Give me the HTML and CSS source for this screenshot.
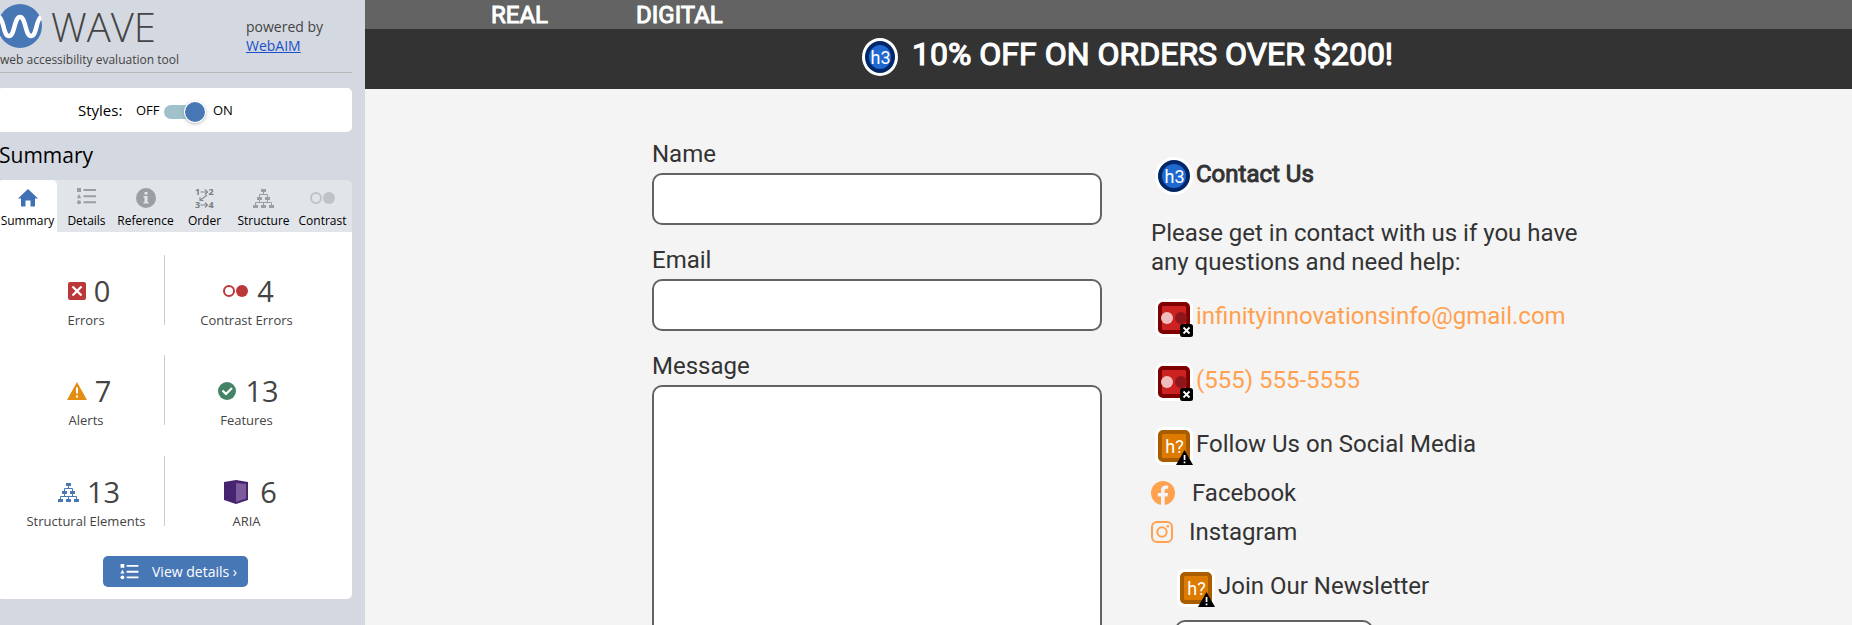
FILE: index.html
```html
<!DOCTYPE html>
<html lang="en">
<head>
<meta charset="utf-8">
<title>Contact</title>
<link rel="stylesheet" href="styles.css">
</head>
<body>
<svg width="0" height="0" class="defs" aria-hidden="true">
  <symbol id="list" viewBox="0 0 19 17"><path d="M0 0h4v4H0zM2 6l2.200 4.200H-.2zM6.500 1h12.500v2H6.500zM6.500 7.200h12.500v2H6.500zM6.500 13.200h12.500v2H6.500z"/><circle cx="2" cy="14.200" r="2"/></symbol>
  <symbol id="tree" viewBox="0 0 21 19"><path d="M8 0h5v3H8zM4 8h5v3H4zM12 8h5v3h-5zM0 16h5v3H0zM8 16h5v3H8zM16 16h5v3h-5z"/><path d="M10.500 3v3M6.500 8V5.500h8V8M6.500 11v3M14.500 11v3M2.500 16v-2.500h16V16M10.500 13.500V16" fill="none" stroke="currentColor"/></symbol>
  <symbol id="pair" viewBox="0 0 25 12"><circle cx="6" cy="6" r="5" fill="none" stroke="currentColor" stroke-width="2"/><circle cx="19" cy="6" r="6"/></symbol>
</svg>
<div class="app">
  <aside class="side">
    <header class="brand">
      <div class="brand-main">
        <div class="logo">
          <svg class="mark" viewBox="0 0 44 44"><circle cx="22" cy="22" r="22" fill="#4877b6"/><path d="M1 13C6 15 5 32 11 32C17 32 16 13 22 13C28 13 27 32 33 32C39 32 38 15 43 13" fill="none" stroke="#fff" stroke-width="4.500"/></svg>
          <span class="wave">WAVE</span>
        </div>
        <div class="tagline">web accessibility evaluation tool</div>
      </div>
      <div class="powered">powered by<br><a href="#">WebAIM</a></div>
    </header>
    <div class="styles-card"><span class="styles-label">Styles:</span><span class="off">OFF</span><span class="track"><i></i></span><span class="on">ON</span></div>
    <h2 class="title">Summary</h2>
    <nav class="tabs">
      <div class="tab active"><div class="tab-icon"><svg width="20" height="18" viewBox="0 0 20 18" fill="#4170b4"><path d="M10 0L20 9.500H17V17.500H12.500V11.500H7.500V17.500H3V9.500H0z"/></svg></div><span>Summary</span></div>
      <div class="tab"><div class="tab-icon raise"><svg width="19" height="17"><use href="#list"/></svg></div><span>Details</span></div>
      <div class="tab"><div class="tab-icon"><svg width="20" height="20" viewBox="0 0 20 20"><circle cx="10" cy="10" r="10"/><path d="M8.500 4h3v2.500h-3zM7.500 8h4v6h1v1.500h-5V14h1V9.500h-1z" fill="#e1e4e9"/></svg></div><span>Reference</span></div>
      <div class="tab"><div class="tab-icon"><svg width="20" height="22" viewBox="0 0 20 22" fill="#777b7e"><text x="0" y="8" class="ord">1</text><text x="13.500" y="8" class="ord">2</text><text x="0" y="21" class="ord">3</text><text x="13.500" y="21" class="ord">4</text><path d="M5.500 5h7M10 2.500l2.500 2.500L10 7.500M5.500 18h7M10 15.500l2.500 2.500-2.500 2.500M12 8l-7 5.500M5 10v3.500h3.500" fill="none" stroke="#85898d" stroke-width="1.100"/></svg></div><span>Order</span></div>
      <div class="tab"><div class="tab-icon"><svg width="21" height="19"><use href="#tree"/></svg></div><span>Structure</span></div>
      <div class="tab"><div class="tab-icon pale"><svg width="25" height="12"><use href="#pair"/></svg></div><span>Contrast</span></div>
    </nav>
    <section class="panel">
      <div class="stats">
        <div class="stat"><div class="count"><svg width="18" height="18" viewBox="0 0 18 18"><rect width="18" height="18" rx="2" fill="#bc3838"/><path d="M4.500 4.500l9 9M13.500 4.500l-9 9" stroke="#fff" stroke-width="2.300"/></svg><b>0</b></div>Errors</div>
        <div class="stat"><div class="count red"><svg width="25" height="12"><use href="#pair"/></svg><b>4</b></div>Contrast Errors</div>
        <div class="stat"><div class="count"><svg width="20" height="18" viewBox="0 0 20 18"><path d="M10 0l10 18H0z" fill="#e38d13"/><path d="M9 5.500h2v6H9zM9 13.500h2v2H9z" fill="#fff"/></svg><b>7</b></div>Alerts</div>
        <div class="stat"><div class="count"><svg width="18" height="18" viewBox="0 0 18 18"><circle cx="9" cy="9" r="9" fill="#458366"/><path d="M4.500 8.500l3.500 3.500 6-6" fill="none" stroke="#fff" stroke-width="2.200"/></svg><b>13</b></div>Features</div>
        <div class="stat"><div class="count blue"><svg width="21" height="19"><use href="#tree"/></svg><b>13</b></div>Structural Elements</div>
        <div class="stat"><div class="count aria"><svg width="24" height="24" viewBox="0 0 24 24"><path d="M0 2L12 0l12 2v18l-12 4-12-4z" fill="#47246f"/><path d="M12 3l10 1v14.500L12 22z" fill="#7d5a9b"/></svg><b>6</b></div>ARIA</div>
      </div>
      <button class="view"><svg width="19" height="16"><use href="#list"/></svg><span>View details ›</span></button>
    </section>
  </aside>
  <main class="page">
    <nav class="top"><span class="real">REAL</span><span class="digital">DIGITAL</span></nav>
    <div class="banner"><span class="flag h3"><em>h3</em></span><strong>10% OFF ON ORDERS OVER $200!</strong></div>
    <div class="content">
      <form class="form">
        <label><span>Name</span><input type="text"></label>
        <label><span>Email</span><input type="text"></label>
        <label><span>Message</span><textarea></textarea></label>
      </form>
      <section class="contact">
        <div class="row contact-head"><span class="flag h3"><em>h3</em></span><strong>Contact Us</strong></div>
        <p class="intro">Please get in contact with us if you have<br>any questions and need help:</p>
        <div class="row link"><span class="flag err"><svg width="35" height="35" viewBox="0 0 35 35"><circle cx="9" cy="16" r="6" fill="#f1bcbc"/><circle cx="23" cy="16" r="6" fill="#8f1719"/><rect x="22" y="22" width="13" height="13" rx="2.500"/><path d="M25.500 25.500l6 6M31.500 25.500l-6 6" stroke="#fff" stroke-width="1.800"/></svg></span><span>infinityinnovationsinfo@gmail.com</span></div>
        <div class="row link"><span class="flag err"><svg width="35" height="35" viewBox="0 0 35 35"><circle cx="9" cy="16" r="6" fill="#f1bcbc"/><circle cx="23" cy="16" r="6" fill="#8f1719"/><rect x="22" y="22" width="13" height="13" rx="2.500"/><path d="M25.500 25.500l6 6M31.500 25.500l-6 6" stroke="#fff" stroke-width="1.800"/></svg></span><span>(555) 555-5555</span></div>
        <div class="row follow"><span class="flag warn"><em>h?</em><svg width="35" height="35" viewBox="0 0 35 35"><path d="M26.500 20L35 35H18z"/><path d="M25.700 25h1.700v5h-1.700zM25.700 31.500h1.700v1.800h-1.700z" fill="#fff"/></svg></span><span>Follow Us on Social Media</span></div>
        <div class="social fb"><svg width="24" height="24" viewBox="0 0 24 24"><circle cx="12" cy="12" r="12" fill="#ffa14f"/><path d="M10 24v-8.500H6.800V12H10V9.300C10 6.100 11.900 4.500 14.700 4.500c1.300 0 2.500.2 2.500.2v3h-1.500c-1.500 0-2 .9-2 1.900V12h3.400l-.6 3.500h-2.800V24z" fill="#f4f4f4"/></svg><span>Facebook</span></div>
        <div class="social ig"><svg width="22" height="22" viewBox="0 0 22 22" fill="none" stroke="#ffa14f" stroke-width="2"><rect x="1" y="1" width="20" height="20" rx="5"/><circle cx="11" cy="11" r="4.700"/><circle cx="16.800" cy="5.200" r="1.300" fill="#ffa14f" stroke="none"/></svg><span>Instagram</span></div>
        <div class="row news"><span class="flag warn"><em>h?</em><svg width="35" height="35" viewBox="0 0 35 35"><path d="M26.500 20L35 35H18z"/><path d="M25.700 25h1.700v5h-1.700zM25.700 31.500h1.700v1.800h-1.700z" fill="#fff"/></svg></span><span>Join Our Newsletter</span></div>
        <input class="news-input" type="text">
      </section>
    </div>
  </main>
</div>
</body>
</html>
```
FILE: styles.css
```css
*, *::before { box-sizing: border-box; }
body { margin: 0; overflow: hidden; }
.defs { display: block; }
.app { display: flex; width: 1852px; height: 625px; overflow: hidden; }

.side { width: 365px; flex: none; padding-right: 13px; background: #d4d8e0; font-family: "Open Sans", sans-serif; color: #000; }
.side svg { flex: none; overflow: visible; }
.brand { display: flex; height: 73px; border-bottom: 1px solid #b5b9b9; color: #444; }
.brand-main { width: 246px; white-space: nowrap; }
.logo { display: flex; height: 53px; padding-top: 4px; margin-left: -2px; }
.mark { width: 44px; height: 44px; }
.wave { margin-left: 9px; font-size: 40px; font-weight: 300; line-height: 45px; }
.tagline { font-size: 12px; line-height: 14px; }
.powered { padding-top: 17px; font-size: 14px; line-height: 19px; }
.powered a { color: #1b50c8; }
.styles-card { display: flex; align-items: center; height: 44px; margin: 15px 0 0 -3px; padding-left: 81px; border-radius: 5px; background: #fff; font-size: 13px; }
.styles-label { width: 58px; font-size: 15px; }
.off { width: 28px; }
.track { display: flex; justify-content: flex-end; align-items: center; width: 36px; height: 14px; margin: 3px 13px 0 0; border-radius: 7px; background: #9fc1cb; }
.track i { width: 20px; height: 20px; flex: none; margin-right: -5px; border-radius: 50%; background: #4877b6; box-shadow: 0 0 0 1px #fff, 0 1px 4px #888; }
.title { margin: 0 0 0 -1px; padding-top: 9px; height: 48px; font-size: 21px; font-weight: 400; line-height: 29px; }
.tabs { display: grid; grid-template-columns: repeat(6, 59px); width: 355px; height: 52px; margin-left: -3px; padding-left: 1px; border-radius: 5px 5px 0 0; background: #e1e4e9; font-size: 12px; line-height: 18px; text-align: center; }
.tab { color: #000; fill: #9b9fa2; white-space: nowrap; }
.tab > span { display: block; margin-top: -4px; }
.tab.active { border-radius: 5px 5px 0 0; background: #fff; }
.tab-icon { display: flex; align-items: center; justify-content: center; height: 36px; color: #9b9fa2; }
.tab-icon.raise { padding-bottom: 3px; }
.tab-icon.pale { color: #bfc2c6; fill: #bfc2c6; }
.ord { font: 700 9px "Open Sans", sans-serif; }
.panel { height: 367px; margin-left: -3px; padding-top: 23px; border-radius: 0 0 5px 5px; background: #fff; }
.stats { display: grid; grid-template-columns: 168px 163px; grid-template-rows: 100px 101px 100px; }
.stat { height: 70px; padding-top: 19px; color: #444; font-size: 13px; line-height: 18px; text-align: center; white-space: nowrap; }
.stat:nth-child(odd) { padding-left: 11px; border-right: 1px solid #ccc; }
.count { display: flex; align-items: center; justify-content: center; gap: 9px; height: 34px; margin-bottom: 3px; padding-left: 4px; }
.stat:nth-child(odd) .count { gap: 8px; padding-left: 6px; }
.count b { color: #444; font-size: 29px; font-weight: 400; line-height: 34px; }
.red { color: #bc3838; fill: #bc3838; }
.blue { color: #4877b6; fill: #4877b6; }
.count.aria { gap: 12px; padding-left: 8px; }
.view { display: flex; align-items: center; width: 145px; height: 31px; margin: 0 0 0 106px; padding: 0 0 0 17px; border: 0; border-radius: 5px; background: #4877b6; color: #fff; fill: #fff; font: 14px "Open Sans", sans-serif; white-space: nowrap; }
.view span { margin-left: 13px; padding-bottom: 1px; }

.page { flex: 1; background: #f4f4f4; color: #333; font-family: Roboto, sans-serif; font-size: 24px; line-height: 29px; white-space: nowrap; }
.top { display: flex; height: 29px; padding: 1px 0 0 126px; background: #636363; color: #fff; -webkit-text-stroke: 1px #fff; }
.real { width: 145px; }
.banner { display: flex; height: 60px; padding: 9px 0 0 497px; background: #333; color: #fff; }
.banner strong { margin: -3px 0 0 14px; font-size: 32px; font-weight: 400; line-height: 38px; -webkit-text-stroke: 1.2px #fff; }
.content { display: flex; gap: 49px; padding: 50px 0 0 287px; }
.form { width: 450px; }
.form label { display: block; height: 106px; }
.form span { display: block; height: 34px; padding-top: 1px; }
.form input, .form textarea { display: block; width: 450px; height: 52px; margin: 0; border: 2px solid #636363; border-radius: 10px; background: #fff; resize: none; }
.form textarea { height: 260px; }
.contact { width: 500px; padding-top: 18px; }
.row { display: flex; height: 38px; padding-left: 4px; }
.row > span:last-child, .row > strong { margin-left: 3px; padding-top: 3px; }
.contact-head { margin-bottom: 24px; }
.contact-head strong { font-weight: 400; -webkit-text-stroke: 1px #333; }
.intro { height: 58px; margin: 0 0 22px; }
.link { margin-bottom: 26px; color: #ffa14f; }
.flag { position: relative; display: block; flex: none; width: 38px; height: 38px; border: 3px solid #fff; border-radius: 8px; background: #fff; text-align: center; }
.flag::before { content: ""; display: block; width: 100%; height: 32px; border: 4px solid; border-radius: 5px; }
.flag em { position: absolute; inset: 2px 0 0 1px; color: #fff; font: 18px/30px Roboto, sans-serif; -webkit-text-stroke: 0; }
.flag svg { position: absolute; left: 0; top: 0; }
.h3, .h3::before { border-radius: 50%; }
.h3::before { border-color: #002868; background: #2069d0; }
.err::before { border-color: #800000; background: #cc2222; }
.warn::before { border-color: #a95c00; background: #dc7b00; }
.banner .flag { width: 36px; }
.social { display: flex; align-items: center; height: 29px; }
.fb { margin-top: 14px; }
.fb svg { margin: 0 17px 2px 0; }
.ig { margin-top: 10px; }
.ig svg { margin: 0 16px 2px 0; }
.news { margin: 22px 0 13px 22px; }
.news-input { display: block; width: 198px; height: 52px; margin-left: 24px; border: 2px solid #636363; border-radius: 10px; background: #fff; }
```
